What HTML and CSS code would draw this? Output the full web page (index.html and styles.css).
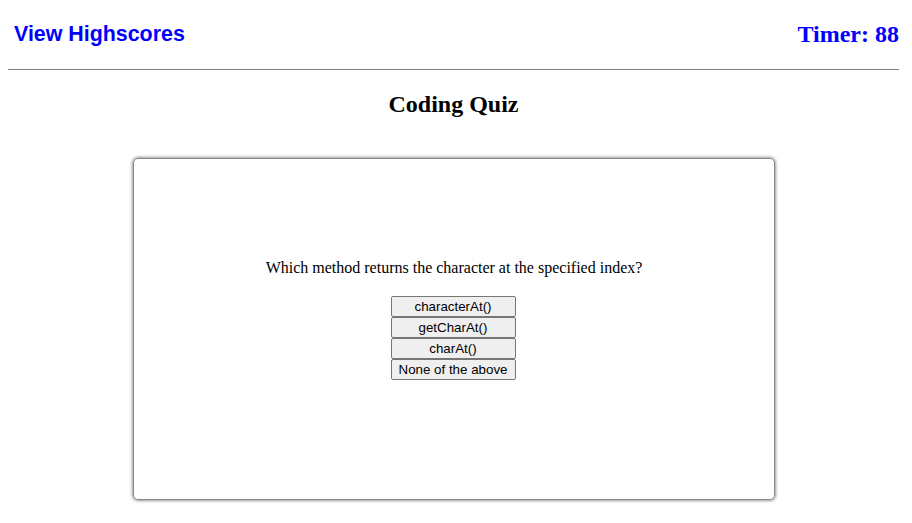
FILE: index.html
```html
<!DOCTYPE html>
<html>
<head>
<meta charset="utf-8">
<link rel="stylesheet" href="styles.css">
</head>
<body>
<header class="top">
  <a class="scores" href="#">View Highscores</a>
  <div class="timer">Timer: 88</div>
</header>
<h2 class="title">Coding Quiz</h2>
<main class="card">
  <p class="question">Which method returns the character at the specified index?</p>
  <div class="choices">
    <button class="choice">characterAt()</button>
    <button class="choice">getCharAt()</button>
    <button class="choice">charAt()</button>
    <button class="choice">None of the above</button>
  </div>
</main>
</body>
</html>
```

FILE: styles.css
```css
html, body {
  margin: 0;
  padding: 0;
  background: #fff;
}
body {
  padding: 8px;
  font-family: "Liberation Serif", "Times New Roman", serif;
}
.top {
  display: flex;
  justify-content: space-between;
  align-items: center;
  width: 891px;
  border-bottom: 1px solid #808080;
  box-sizing: border-box;
  height: 62px;
}
.scores {
  font-family: "Liberation Sans", Arial, sans-serif;
  font-weight: bold;
  font-size: 21.4px;
  color: #0000ff;
  text-decoration: none;
  margin-left: 6px;
  margin-bottom: 8px;
}
.timer {
  font-weight: bold;
  font-size: 24px;
  color: #0000ff;
  margin-bottom: 8px;
}
.title {
  text-align: center;
  font-size: 24px;
  margin: 21px 0 0 0;
  width: 891px;
}
.card {
  width: 642px;
  height: 342px;
  box-sizing: border-box;
  margin: 40px 0 0 125px;
  padding-bottom: 19px;
  border: 1px solid #888;
  border-radius: 5px;
  box-shadow: 0 0 3px 1px #999;
  display: flex;
  flex-direction: column;
  align-items: center;
  justify-content: center;
}
.question {
  font-size: 16px;
  margin: 0 0 19px 0;
}
.choices {
  display: flex;
  flex-direction: column;
  align-items: center;
  margin-right: 2px;
}
.choice {
  display: block;
  width: 125px;
  height: 21px;
  font-family: "Liberation Sans", Arial, sans-serif;
  font-size: 13.33px;
  background: #efefef;
  border: 1px solid #767676;
  border-radius: 2px;
  padding: 1px 6px;
  color: #000;
}
```
